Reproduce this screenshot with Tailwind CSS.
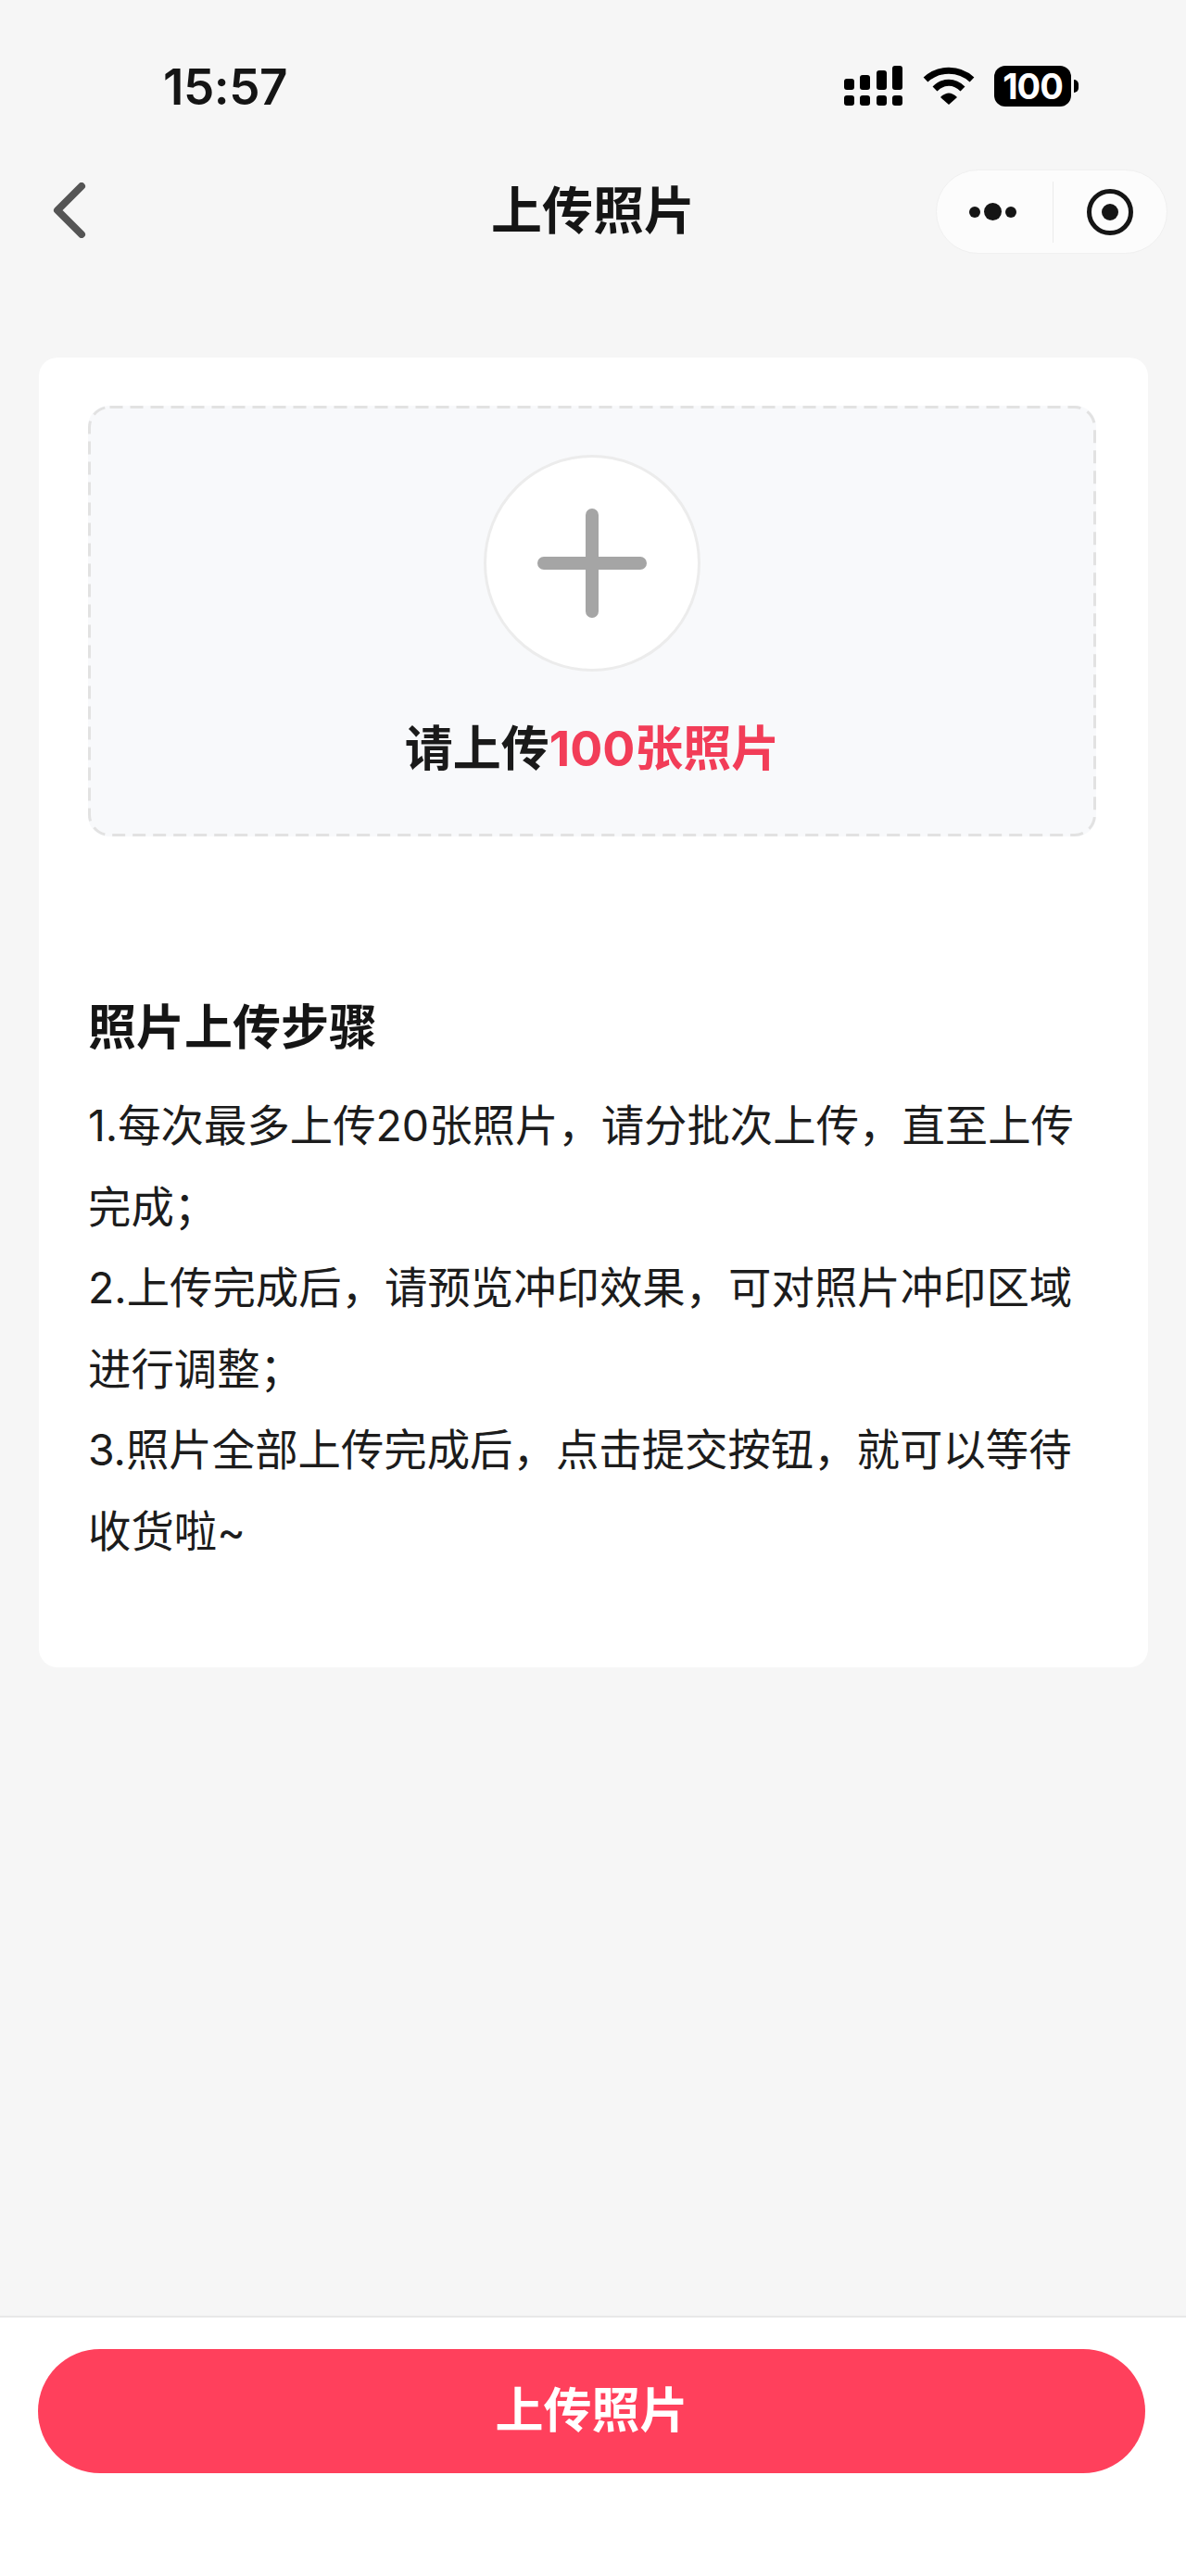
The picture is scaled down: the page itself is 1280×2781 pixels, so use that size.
<!DOCTYPE html>
<html lang="zh">
<head>
<meta charset="utf-8">
<script src="https://cdn.jsdelivr.net/npm/@tailwindcss/browser@4"></script>
</head>
<body>
<div class="w-[1280px] h-[2781px] flex flex-col bg-[#f6f6f6] text-[#151515] font-['Inter','Noto_Sans_CJK_SC',sans-serif] overflow-hidden">
  <div class="h-[186px] pt-[66px] pl-[176px] pr-[116px] flex items-start justify-between shrink-0">
    <div class="text-[53px] leading-[56px] font-semibold tracking-[-0.5px]">15:57</div>
    <div class="flex items-center gap-[20px] pt-[5px]">
      <svg width="66" height="44" viewBox="0 0 66 44" fill="#000"><rect x="1" y="14" width="11" height="12" rx="3"/><rect x="18" y="10" width="11" height="16" rx="3"/><rect x="36" y="5" width="11" height="21" rx="3"/><rect x="53" y="0" width="11" height="26" rx="3"/><rect x="1" y="32" width="11" height="11" rx="3"/><rect x="18" y="32" width="11" height="11" rx="3"/><rect x="36" y="32" width="11" height="11" rx="3"/><rect x="53" y="32" width="11" height="11" rx="3"/></svg>
      <svg width="56" height="42" viewBox="0 0 56 42" fill="none" stroke="#000" stroke-width="7"><path d="M3 14C17 1 39 1 53 14"/><path d="M13 24C22 15 34 15 43 24"/><path d="M19 33L28 41L37 33C31 27 25 27 19 33Z" fill="#000" stroke="none"/></svg>
      <div class="flex items-center ml-[1px]">
        <div class="w-[83px] h-[44px] rounded-[12px] bg-black text-white text-[38px] leading-[44px] font-bold text-center tracking-[-1px]">100</div>
        <div class="ml-[3px] w-[5px] h-[14px] rounded-r-full bg-black"></div>
      </div>
    </div>
  </div>
  <div class="relative h-[82px] shrink-0 flex items-center justify-center">
    <svg class="absolute left-[56px] top-[11px]" width="38" height="60" viewBox="0 0 38 60" fill="none" stroke="#555" stroke-width="8" stroke-linecap="round" stroke-linejoin="round"><path d="M32 4L6 30L32 56"/></svg>
    <div class="text-[55px] leading-[82px] font-bold">上传照片</div>
    <div class="absolute left-[1010px] top-[-3px] w-[250px] h-[91px] rounded-full bg-[#fcfcfc] border border-[#f0f0f0] flex items-center">
      <div class="w-[126px] h-[66px] border-r border-[#ebebeb] flex items-center justify-center gap-[4px] pr-[4px]">
        <span class="w-[12px] h-[12px] rounded-full bg-[#151515]"></span>
        <span class="w-[19px] h-[19px] rounded-full bg-[#151515]"></span>
        <span class="w-[12px] h-[12px] rounded-full bg-[#151515]"></span>
      </div>
      <div class="flex-1 flex items-center justify-center">
        <div class="w-[50px] h-[50px] rounded-full border-[5px] border-[#151515] flex items-center justify-center">
          <span class="w-[18px] h-[18px] rounded-full bg-[#151515]"></span>
        </div>
      </div>
    </div>
  </div>
  <div class="flex-1 px-[42px] pt-[118px]">
    <div class="w-[1197px] h-[1414px] bg-white rounded-[20px] pt-[52px] px-[53px]">
      <div class="relative w-[1088px] h-[465px] rounded-[22px] bg-[#f8f9fb] flex flex-col items-center pt-[53px]">
        <svg class="absolute inset-0" width="1088" height="465" fill="none"><rect x="1.5" y="1.5" width="1085" height="462" rx="22" stroke="#e2e2e2" stroke-width="3" stroke-dasharray="14 8"/></svg>
        <div class="w-[234px] h-[234px] rounded-full bg-white border-[3px] border-[#ececec] flex items-center justify-center">
          <svg width="120" height="120" viewBox="0 0 120 120" stroke="#a5a5a5" stroke-width="14" stroke-linecap="round"><path d="M60 8V112M8 60H112"/></svg>
        </div>
        <div class="mt-[46px] text-[52px] leading-[76px] font-bold text-[#1a1a1a]">请上传<span class="text-[#f23d58]">100张照片</span></div>
      </div>
      <div class="mt-[172px] text-[52px] leading-[70px] font-bold">照片上传步骤</div>
      <div class="mt-[27px] text-[46.4px] leading-[87.6px] text-[#1c1c1c] w-[1080px]">
        <p>1.每次最多上传20张照片，请分批次上传，直至上传完成；</p>
        <p>2.上传完成后，请预览冲印效果，可对照片冲印区域进行调整；</p>
        <p>3.照片全部上传完成后，点击提交按钮，就可以等待收货啦~</p>
      </div>
    </div>
  </div>
  <div class="h-[281px] shrink-0 bg-white border-t-[2px] border-[#e8e8e8] pt-[34px] pl-[41px]">
    <div class="w-[1195px] h-[134px] rounded-full bg-[#ff405c] text-white text-[52px] font-bold flex items-center justify-center">上传照片</div>
  </div>
</div>
</body>
</html>
